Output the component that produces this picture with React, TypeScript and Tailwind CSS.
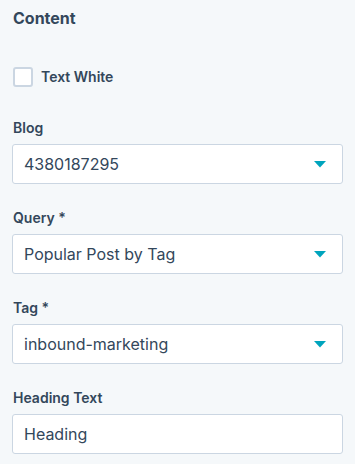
const fields = [
  { label: "Blog", value: "4380187295", select: true },
  { label: "Query *", value: "Popular Post by Tag", select: true },
  { label: "Tag *", value: "inbound-marketing", select: true },
  { label: "Heading Text", value: "Heading", select: false },
];

const Caret = () => (
  <svg width="12" height="7" viewBox="0 0 12 7" className="shrink-0">
    <path d="M0 0 H12 L6 6.5 Z" fill="#00a4bd" />
  </svg>
);

export default function App() {
  return (
    <div
      className="min-h-screen bg-[#f5f8fa] text-[#33475b] px-3 pt-[6px] pr-3"
      style={{ fontFamily: "Inter, 'Noto Sans', sans-serif" }}
    >
      <h2 className="text-base font-bold leading-6 ml-px">Content</h2>

      <label className="mt-[37px] ml-px flex items-center gap-[8px] h-5">
        <span className="w-5 h-5 rounded-[3px] border-2 border-[#cbd6e2] bg-white" />
        <span className="text-sm font-semibold">Text White</span>
      </label>

      <div className="mt-[31px] flex flex-col gap-6">
        {fields.map((f) => (
          <div key={f.label} className="flex flex-col gap-[6px]">
            <div className="text-sm font-semibold leading-5 ml-px">{f.label}</div>
            <div className="h-10 w-[331px] flex items-center justify-between rounded-[3px] border border-[#cbd6e2] bg-white pl-[11px] pr-[16px]">
              <span className="text-base">{f.value}</span>
              {f.select && <Caret />}
            </div>
          </div>
        ))}
      </div>
    </div>
  );
}
